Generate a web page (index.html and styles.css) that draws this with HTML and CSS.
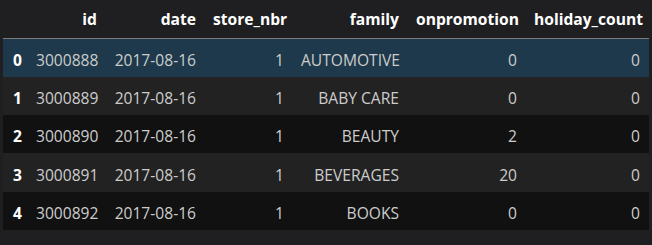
FILE: index.html
```html
<!DOCTYPE html>
<html>
<head>
<meta charset="utf-8">
<link rel="stylesheet" href="styles.css">
</head>
<body>
<div class="wrap">
<table class="df">
<colgroup>
<col class="c-idx"><col class="c-id"><col class="c-date"><col class="c-store"><col class="c-fam"><col class="c-promo"><col class="c-hol">
</colgroup>
<thead>
<tr><th></th><th>id</th><th>date</th><th>store_nbr</th><th>family</th><th>onpromotion</th><th>holiday_count</th></tr>
</thead>
<tbody>
<tr class="sel"><th>0</th><td>3000888</td><td>2017-08-16</td><td>1</td><td>AUTOMOTIVE</td><td>0</td><td>0</td></tr>
<tr class="even"><th>1</th><td>3000889</td><td>2017-08-16</td><td>1</td><td>BABY CARE</td><td>0</td><td>0</td></tr>
<tr class="odd"><th>2</th><td>3000890</td><td>2017-08-16</td><td>1</td><td>BEAUTY</td><td>2</td><td>0</td></tr>
<tr class="even"><th>3</th><td>3000891</td><td>2017-08-16</td><td>1</td><td>BEVERAGES</td><td>20</td><td>0</td></tr>
<tr class="odd"><th>4</th><td>3000892</td><td>2017-08-16</td><td>1</td><td>BOOKS</td><td>0</td><td>0</td></tr>
</tbody>
</table>
</div>
</body>
</html>
```
FILE: styles.css
```css
html, body {
  margin: 0;
  padding: 0;
  background: #1f1f22;
}
.wrap {
  padding: 0 3px;
}
.df {
  border-collapse: collapse;
  table-layout: fixed;
  width: 646px;
  font-family: "Open Sans", "Noto Sans", sans-serif;
  font-size: 15.6px;
  color: #cccccc;
  white-space: nowrap;
}
.c-idx { width: 25px; }
.c-id { width: 78px; }
.c-date { width: 99px; }
.c-store { width: 88px; }
.c-fam { width: 115px; }
.c-promo { width: 118px; }
.c-hol { width: 123px; }
.df th, .df td {
  padding: 0 9px 0 8px;
  text-align: right;
  overflow: hidden;
}
.df thead th {
  height: 38px;
  color: #ffffff;
  font-weight: 700;
  border-bottom: 1px solid #7b7b7b;
  vertical-align: middle;
}
.df tbody tr {
  height: 38.3px;
}
.df tbody th {
  text-align: left;
  color: #ffffff;
  font-weight: 700;
  padding-left: 10px;
}
.df tbody td, .df tbody th {
  padding-top: 4px;
}
.sel { background: #1d394b; }
.even { background: #222222; }
.odd { background: #111111; }
```
